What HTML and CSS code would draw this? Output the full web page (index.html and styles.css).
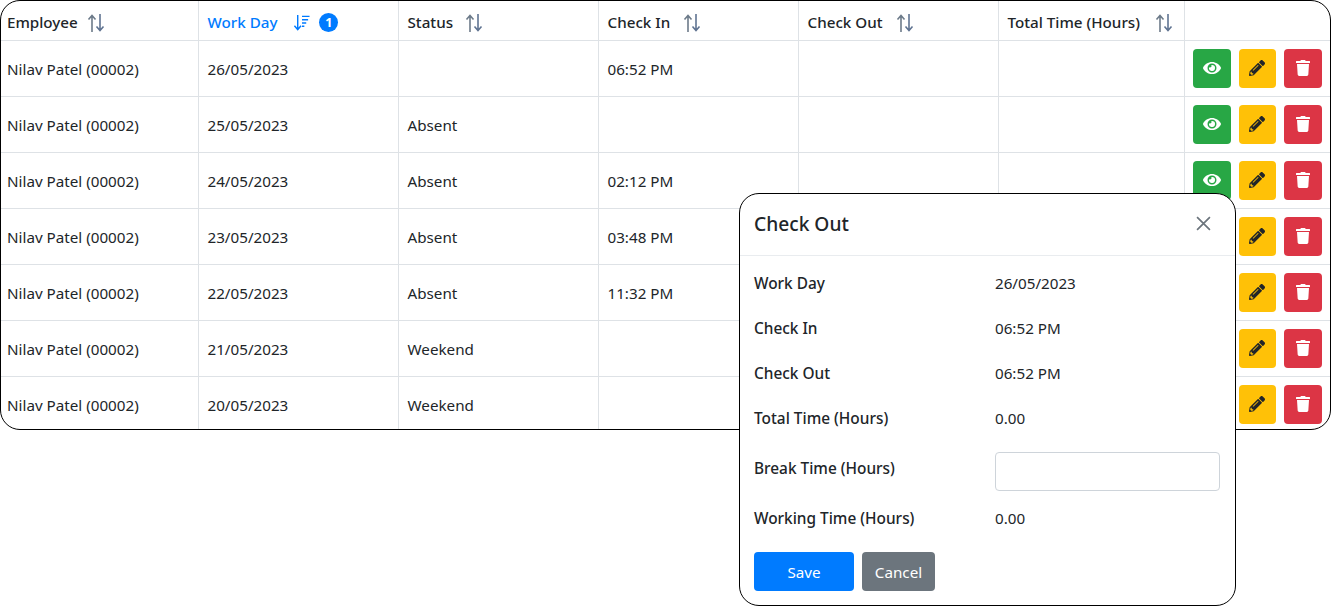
FILE: index.html
```html
<!DOCTYPE html>
<html lang="en">

<head>
    <meta charset="UTF-8">
    <meta name="viewport" content="width=device-width, initial-scale=1.0">
    <title>Attendance</title>
    <link rel="stylesheet" href="styles.css">
</head>

<body>
    <svg class="icon-defs" aria-hidden="true">
        <symbol id="i-sort" viewBox="0 0 18 18">
            <path d="M5 18V1.5M1.5 5.5L5 1.5l3.500 4" class="arrow-up" />
            <path d="M13 0v16.500M9.500 12.500l3.500 4 3.500-4" class="arrow-down" />
        </symbol>
        <symbol id="i-eye" viewBox="0 0 576 512">
            <path d="M572.52 241.4C518.29 135.59 410.93 64 288 64S57.68 135.64 3.48 241.41a32.35 32.35 0 0 0 0 29.19C57.71 376.41 165.07 448 288 448s230.32-71.64 284.52-177.41a32.35 32.35 0 0 0 0-29.19zM288 400a144 144 0 1 1 144-144 143.93 143.93 0 0 1-144 144zm0-240a95.31 95.31 0 0 0-25.31 3.79 47.85 47.85 0 0 1-66.9 66.9A95.78 95.78 0 1 0 288 160z" />
        </symbol>
        <symbol id="i-pencil" viewBox="0 0 512 512">
            <path d="M497.9 142.1l-46.1 46.1c-4.7 4.7-12.3 4.7-17 0l-111-111c-4.7-4.7-4.7-12.3 0-17l46.1-46.1c18.7-18.7 49.1-18.7 67.9 0l60.1 60.1c18.8 18.7 18.8 49.1 0 67.9zM284.2 99.8L21.6 362.4.4 483.9c-2.9 16.4 11.4 30.6 27.8 27.8l121.5-21.3 262.6-262.6c4.7-4.7 4.7-12.3 0-17l-111-111c-4.8-4.7-12.4-4.7-17.1 0zM124.1 339.9c-5.5-5.5-5.5-14.3 0-19.8l154-154c5.5-5.5 14.3-5.5 19.8 0s5.5 14.3 0 19.8l-154 154c-5.5 5.5-14.3 5.5-19.8 0zM88 424h48v36.3l-64.5 11.3-31.1-31.1L51.7 376H88v48z" />
        </symbol>
        <symbol id="i-trash" viewBox="0 0 448 512">
            <path d="M432 32H312l-9.4-18.7A24 24 0 0 0 281.1 0H166.8a23.72 23.72 0 0 0-21.4 13.3L136 32H16A16 16 0 0 0 0 48v32a16 16 0 0 0 16 16h416a16 16 0 0 0 16-16V48a16 16 0 0 0-16-16zM53.2 467a48 48 0 0 0 47.9 45h245.8a48 48 0 0 0 47.9-45L416 128H32z" />
        </symbol>
    </svg>

    <div class="table-wrap">
        <table class="grid">
            <colgroup>
                <col class="col-employee">
                <col class="col-day">
                <col class="col-day">
                <col class="col-day">
                <col class="col-day">
                <col class="col-total">
                <col>
            </colgroup>
            <thead>
                <tr>
                    <th><span class="th-label">Employee</span><svg class="sort sort-employee"><use href="#i-sort" /></svg></th>
                    <th class="active">
                        <span class="th-label">Work Day</span>
                        <svg class="sort-active" viewBox="0 0 18 18">
                            <path d="M5 1v15M1.500 12.500L5 16.500l3.500-4" />
                            <path d="M9.500 2.500h8M9.500 6h6.500M9.500 9.500h4.500M9.500 13h2.500" />
                        </svg>
                        <span class="badge">1</span>
                    </th>
                    <th><span class="th-label">Status</span><svg class="sort sort-status"><use href="#i-sort" /></svg></th>
                    <th><span class="th-label">Check In</span><svg class="sort sort-in"><use href="#i-sort" /></svg></th>
                    <th><span class="th-label">Check Out</span><svg class="sort sort-out"><use href="#i-sort" /></svg></th>
                    <th><span class="th-label">Total Time (Hours)</span><svg class="sort sort-total"><use href="#i-sort" /></svg></th>
                    <th></th>
                </tr>
            </thead>
            <tbody>
                <tr>
                    <td>Nilav Patel (00002)</td>
                    <td>26/05/2023</td>
                    <td></td>
                    <td>06:52 PM</td>
                    <td></td>
                    <td></td>
                    <td class="cell-actions">
                        <div class="actions">
                            <button class="btn btn-view"><svg class="ic-eye"><use href="#i-eye" /></svg></button>
                            <button class="btn btn-edit"><svg class="ic-pencil"><use href="#i-pencil" /></svg></button>
                            <button class="btn btn-delete"><svg class="ic-trash"><use href="#i-trash" /></svg></button>
                        </div>
                    </td>
                </tr>
                <tr>
                    <td>Nilav Patel (00002)</td>
                    <td>25/05/2023</td>
                    <td>Absent</td>
                    <td></td>
                    <td></td>
                    <td></td>
                    <td class="cell-actions">
                        <div class="actions">
                            <button class="btn btn-view"><svg class="ic-eye"><use href="#i-eye" /></svg></button>
                            <button class="btn btn-edit"><svg class="ic-pencil"><use href="#i-pencil" /></svg></button>
                            <button class="btn btn-delete"><svg class="ic-trash"><use href="#i-trash" /></svg></button>
                        </div>
                    </td>
                </tr>
                <tr>
                    <td>Nilav Patel (00002)</td>
                    <td>24/05/2023</td>
                    <td>Absent</td>
                    <td>02:12 PM</td>
                    <td></td>
                    <td></td>
                    <td class="cell-actions">
                        <div class="actions">
                            <button class="btn btn-view"><svg class="ic-eye"><use href="#i-eye" /></svg></button>
                            <button class="btn btn-edit"><svg class="ic-pencil"><use href="#i-pencil" /></svg></button>
                            <button class="btn btn-delete"><svg class="ic-trash"><use href="#i-trash" /></svg></button>
                        </div>
                    </td>
                </tr>
                <tr>
                    <td>Nilav Patel (00002)</td>
                    <td>23/05/2023</td>
                    <td>Absent</td>
                    <td>03:48 PM</td>
                    <td></td>
                    <td></td>
                    <td class="cell-actions">
                        <div class="actions">
                            <button class="btn btn-view"><svg class="ic-eye"><use href="#i-eye" /></svg></button>
                            <button class="btn btn-edit"><svg class="ic-pencil"><use href="#i-pencil" /></svg></button>
                            <button class="btn btn-delete"><svg class="ic-trash"><use href="#i-trash" /></svg></button>
                        </div>
                    </td>
                </tr>
                <tr>
                    <td>Nilav Patel (00002)</td>
                    <td>22/05/2023</td>
                    <td>Absent</td>
                    <td>11:32 PM</td>
                    <td></td>
                    <td></td>
                    <td class="cell-actions">
                        <div class="actions">
                            <button class="btn btn-view"><svg class="ic-eye"><use href="#i-eye" /></svg></button>
                            <button class="btn btn-edit"><svg class="ic-pencil"><use href="#i-pencil" /></svg></button>
                            <button class="btn btn-delete"><svg class="ic-trash"><use href="#i-trash" /></svg></button>
                        </div>
                    </td>
                </tr>
                <tr>
                    <td>Nilav Patel (00002)</td>
                    <td>21/05/2023</td>
                    <td>Weekend</td>
                    <td></td>
                    <td></td>
                    <td></td>
                    <td class="cell-actions">
                        <div class="actions">
                            <button class="btn btn-view"><svg class="ic-eye"><use href="#i-eye" /></svg></button>
                            <button class="btn btn-edit"><svg class="ic-pencil"><use href="#i-pencil" /></svg></button>
                            <button class="btn btn-delete"><svg class="ic-trash"><use href="#i-trash" /></svg></button>
                        </div>
                    </td>
                </tr>
                <tr>
                    <td>Nilav Patel (00002)</td>
                    <td>20/05/2023</td>
                    <td>Weekend</td>
                    <td></td>
                    <td></td>
                    <td></td>
                    <td class="cell-actions">
                        <div class="actions">
                            <button class="btn btn-view"><svg class="ic-eye"><use href="#i-eye" /></svg></button>
                            <button class="btn btn-edit"><svg class="ic-pencil"><use href="#i-pencil" /></svg></button>
                            <button class="btn btn-delete"><svg class="ic-trash"><use href="#i-trash" /></svg></button>
                        </div>
                    </td>
                </tr>
            </tbody>
        </table>
    </div>

    <div class="modal">
        <div class="modal-header">
            <h5 class="modal-title">Check Out</h5>
            <svg class="modal-close" viewBox="0 0 14 14">
                <path d="M1 1l12 12M13 1L1 13" />
            </svg>
        </div>
        <div class="modal-body">
            <div class="field"><label>Work Day</label><span>26/05/2023</span></div>
            <div class="field"><label>Check In</label><span>06:52 PM</span></div>
            <div class="field"><label>Check Out</label><span>06:52 PM</span></div>
            <div class="field"><label>Total Time (Hours)</label><span>0.00</span></div>
            <div class="field field-input"><label for="break-time">Break Time (Hours)</label><input id="break-time" type="text"></div>
            <div class="field"><label>Working Time (Hours)</label><span>0.00</span></div>
            <div class="modal-actions">
                <button class="btn-save">Save</button>
                <button class="btn-cancel">Cancel</button>
            </div>
        </div>
    </div>
</body>

</html>
```

FILE: styles.css
```css
* {
    box-sizing: border-box;
    margin: 0;
    padding: 0;
}

body {
    height: 606px;
    overflow: hidden;
    background: #fff;
    color: #212529;
    font-family: "Noto Sans", "Open Sans", sans-serif;
    font-size: 15.2px;
}

.icon-defs {
    display: none;
}

.table-wrap {
    width: 1331px;
    height: 430px;
    border: 1px solid #000;
    border-radius: 20px;
    overflow: hidden;
}

.grid {
    width: 100%;
    table-layout: fixed;
    border-collapse: collapse;
}

.col-employee {
    width: 197px;
}

.col-day {
    width: 200px;
}

.col-total {
    width: 186px;
}

.grid th,
.grid td {
    border-right: 1px solid #dee2e6;
    border-bottom: 1px solid #dee2e6;
    padding: 2px 6px 0 9px;
    text-align: left;
    white-space: nowrap;
}

.grid th:first-child,
.grid td:first-child {
    padding-left: 6px;
}

.grid th:last-child,
.grid td:last-child {
    border-right: 0;
}

.grid td.cell-actions {
    padding: 0 0 0 8px;
}

.grid tbody tr:last-child td {
    border-bottom: 0;
}

.grid thead tr {
    height: 39px;
}

.grid tbody tr {
    height: 56px;
}

.grid th {
    font-weight: 500;
}

.th-label {
    vertical-align: middle;
}

th.active {
    color: #007bff;
}

.sort {
    width: 18px;
    height: 18px;
    vertical-align: -6px;
    fill: none;
    stroke-width: 1.6;
}

.sort-employee { margin-left: 9px; }
.sort-status { margin-left: 12px; }
.sort-in { margin-left: 13px; }
.sort-out { margin-left: 13px; }
.sort-total { margin-left: 15px; }

.arrow-up {
    stroke: #6c7a89;
}

.arrow-down {
    stroke: #5f7391;
}

.sort-active {
    width: 17px;
    height: 17px;
    margin-left: 12px;
    vertical-align: middle;
    fill: none;
    stroke: #007bff;
    stroke-width: 1.500;
}

.badge {
    display: inline-block;
    width: 19px;
    height: 19px;
    margin-left: 5px;
    border-radius: 50%;
    background: #007bff;
    color: #fff;
    font-size: 12.5px;
    font-weight: 700;
    line-height: 19px;
    text-align: center;
    vertical-align: middle;
}

.actions {
    display: flex;
    gap: 8px;
}

.btn {
    display: flex;
    align-items: center;
    justify-content: center;
    width: 38px;
    height: 39px;
    border: 0;
    border-radius: 4px;
}

.btn-view {
    background: #28a745;
    fill: #fff;
}

.btn-edit {
    width: 37px;
    background: #ffc107;
    fill: #212529;
}

.btn-delete {
    background: #dc3545;
    fill: #fff;
}

.ic-eye {
    width: 18px;
    height: 16px;
}

.ic-pencil {
    width: 16px;
    height: 16px;
}

.ic-trash {
    width: 14px;
    height: 16px;
}

.modal {
    position: absolute;
    left: 739px;
    top: 193px;
    width: 497px;
    height: 413px;
    border: 1px solid #000;
    border-radius: 20px;
    background: #fff;
    overflow: hidden;
}

.modal-header {
    display: flex;
    align-items: center;
    justify-content: space-between;
    height: 62px;
    padding: 0 24px 2px 14px;
    border-bottom: 1px solid #e9ecef;
}

.modal-title {
    font-size: 19.200px;
    font-weight: 500;
}

.modal-close {
    width: 15px;
    height: 15px;
    fill: none;
    stroke: #6c757d;
    stroke-width: 1.6;
}

.modal-body {
    padding: 4px 15px 0 14px;
}

.field {
    display: flex;
    align-items: center;
    height: 45px;
}

.field-input {
    height: 55px;
}

.field label {
    flex: 0 0 241px;
    padding-top: 2px;
    font-size: 15.400px;
    font-weight: 500;
}

.field input {
    width: 225px;
    height: 39px;
    margin-top: 8px;
    border: 1px solid #ced4da;
    border-radius: 4px;
}

.modal-actions {
    display: flex;
    gap: 8px;
    margin-top: 12px;
}

.modal-actions button {
    height: 39px;
    border: 0;
    border-radius: 4px;
    color: #fff;
    font: inherit;
}

.btn-save {
    width: 100px;
    background: #007bff;
}

.btn-cancel {
    width: 73px;
    background: #6c757d;
}
```
